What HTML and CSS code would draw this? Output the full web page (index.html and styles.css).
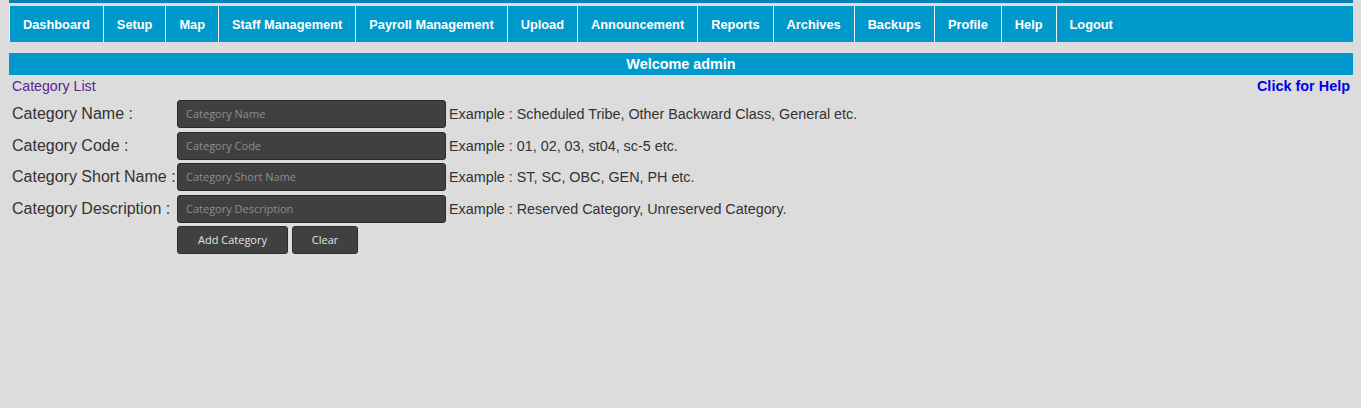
FILE: index.html
```html
<!DOCTYPE html>
<html>
<head>
<meta charset="utf-8">
<link rel="stylesheet" href="styles.css">
</head>
<body>
<div class="wrap">
  <div class="topstrip"></div>
  <nav class="nav">
    <a class="nav-item">Dashboard</a>
    <a class="nav-item">Setup</a>
    <a class="nav-item">Map</a>
    <a class="nav-item">Staff Management</a>
    <a class="nav-item">Payroll Management</a>
    <a class="nav-item">Upload</a>
    <a class="nav-item">Announcement</a>
    <a class="nav-item">Reports</a>
    <a class="nav-item">Archives</a>
    <a class="nav-item">Backups</a>
    <a class="nav-item">Profile</a>
    <a class="nav-item">Help</a>
    <a class="nav-item">Logout</a>
  </nav>
  <div class="welcome">Welcome admin</div>
  <div class="subbar">
    <a class="cat-list">Category List</a>
    <a class="help-link">Click for Help</a>
  </div>
  <form class="form">
    <label class="lbl">Category Name :</label>
    <input class="field" type="text" placeholder="Category Name">
    <span class="example">Example : Scheduled Tribe, Other Backward Class, General etc.</span>

    <label class="lbl">Category Code :</label>
    <input class="field" type="text" placeholder="Category Code">
    <span class="example">Example : 01, 02, 03, st04, sc-5 etc.</span>

    <label class="lbl">Category Short Name :</label>
    <input class="field" type="text" placeholder="Category Short Name">
    <span class="example">Example : ST, SC, OBC, GEN, PH etc.</span>

    <label class="lbl">Category Description :</label>
    <input class="field" type="text" placeholder="Category Description">
    <span class="example">Example : Reserved Category, Unreserved Category.</span>

    <span class="lbl"></span>
    <div class="buttons">
      <button type="button" class="btn btn-add">Add Category</button>
      <button type="button" class="btn btn-clear">Clear</button>
    </div>
    <span></span>
  </form>
</div>
</body>
</html>
```
FILE: styles.css
```css
html, body {
  margin: 0;
  padding: 0;
  background: #dcdcdc;
  font-family: "Liberation Sans", Arial, sans-serif;
}

.wrap {
  margin-left: 9px;
  width: 1344px;
}

.topstrip {
  height: 3px;
  background: #0b80b6;
  margin-bottom: 3px;
}

.nav {
  display: flex;
  height: 36px;
  background: #0099cc;
}

.nav-item {
  display: flex;
  align-items: center;
  padding: 0 13px 0 13px;
  border-left: 1px solid #f2f2f2;
  color: #ffffff;
  font-weight: bold;
  font-size: 12.8px;
  white-space: nowrap;
}

.welcome {
  margin-top: 11px;
  height: 22px;
  line-height: 22px;
  background: #0099cc;
  color: #ffffff;
  font-weight: bold;
  font-size: 14.4px;
  text-align: center;
}

.subbar {
  display: flex;
  justify-content: space-between;
  align-items: center;
  height: 22px;
  padding: 0 3px;
  font-size: 14px;
}

.cat-list {
  color: #5b1f94;
  font-size: 14.2px;
}

.help-link {
  color: #0000ee;
  font-weight: bold;
  font-size: 14.45px;
}

.form {
  display: grid;
  grid-template-columns: 165px 269px auto;
  grid-auto-rows: 28px;
  row-gap: 3.5px;
  align-items: center;
  margin-top: 3px;
  padding-left: 3px;
}

.lbl {
  font-size: 16px;
  color: #333333;
  white-space: nowrap;
}

.field {
  box-sizing: border-box;
  width: 269px;
  height: 28px;
  margin: 0;
  padding: 0 8px 1px 8px;
  background: #404040;
  border: 1px solid #2b2b2b;
  border-radius: 3px;
  color: #eeeeee;
  font-family: "Open Sans", "Noto Sans", sans-serif;
  font-size: 11px;
  outline: none;
}

.field::placeholder {
  color: #8d8d8d;
}

.example {
  padding-left: 3px;
  font-size: 14.35px;
  color: #333333;
  white-space: nowrap;
}

.buttons {
  display: flex;
  gap: 4px;
}

.btn {
  box-sizing: border-box;
  height: 28px;
  margin: 0;
  background: #404040;
  border: 1px solid #2b2b2b;
  border-radius: 3px;
  color: #e4e4e4;
  font-family: "Open Sans", "Noto Sans", sans-serif;
  font-size: 11px;
  padding: 0 0 2px 0;
}

.btn-add {
  width: 111px;
}

.btn-clear {
  width: 66px;
}
```
